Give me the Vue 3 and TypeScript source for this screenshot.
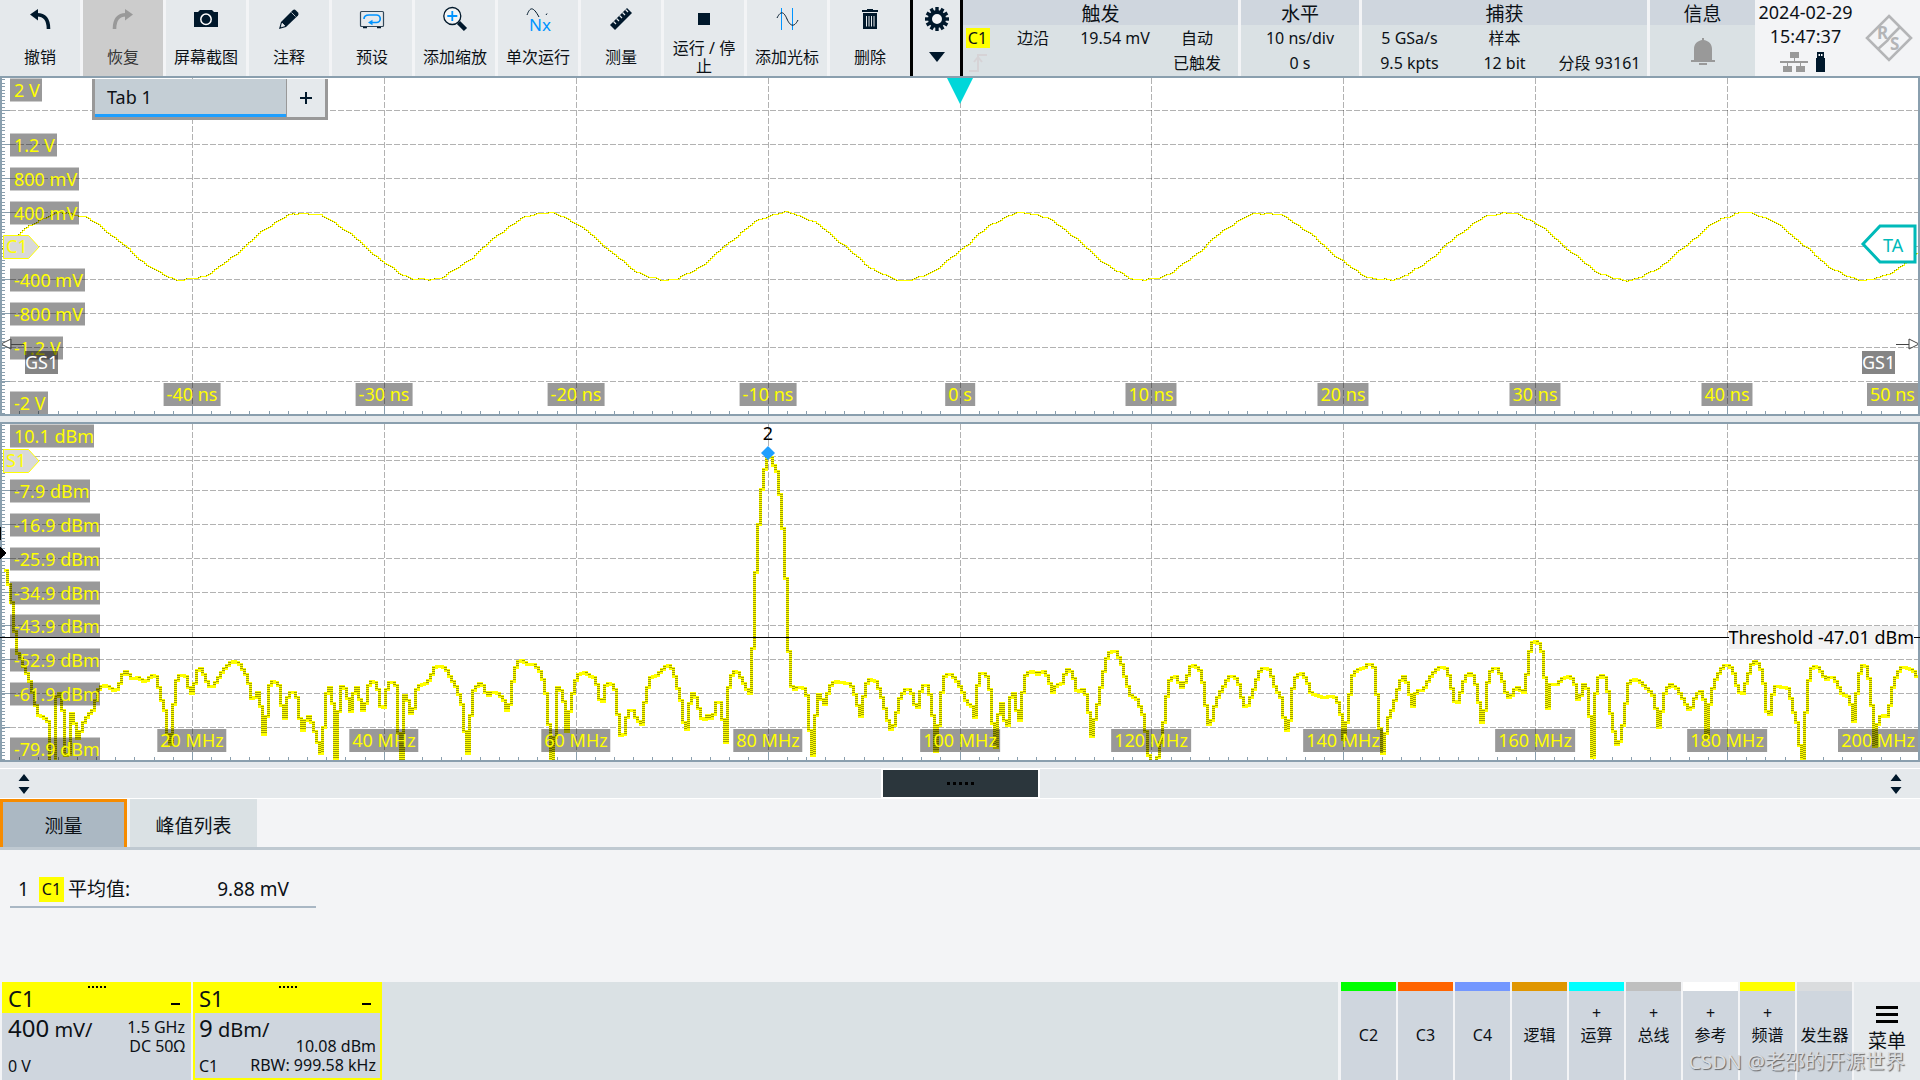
<script setup lang="ts">
interface Tool { id: string; label: string; disabled?: boolean }
interface Label { text: string; pos: number }
interface Source { name: string; color: string; add?: boolean }

const tools: Tool[] = [
  { id: 'undo', label: '撤销' },
  { id: 'redo', label: '恢复', disabled: true },
  { id: 'camera', label: '屏幕截图' },
  { id: 'pencil', label: '注释' },
  { id: 'preset', label: '预设' },
  { id: 'zoom', label: '添加缩放' },
  { id: 'single', label: '单次运行' },
  { id: 'ruler', label: '测量' },
  { id: 'stop', label: '运行 / 停止' },
  { id: 'cursor', label: '添加光标' },
  { id: 'trash', label: '删除' },
]

const sources: Source[] = [
  { name: 'C2', color: '#00ff00' },
  { name: 'C3', color: '#ff6400' },
  { name: 'C4', color: '#7397ff' },
  { name: '逻辑', color: '#e09600' },
  { name: '运算', color: '#00ffff', add: true },
  { name: '总线', color: '#bfbfbf', add: true },
  { name: '参考', color: '#ffffff', add: true },
  { name: '频谱', color: '#ffff00', add: true },
  { name: '发生器', color: '#dadcde' },
]

// Both diagrams share one drawing space.
const W = 1920
const H = 340
const DIVISION = 191.9
const rows = [34.5, 68.5, 102.5, 136.5, 170.5, 203.5, 237.5, 271.5, 305.5]
const columns = Array.from({ length: 9 }, (_, i) => Math.round(DIVISION * (i + 1)) + 0.5)

const voltLabels: Label[] = [
  { text: '2 V', pos: 14 },
  { text: '1.2 V', pos: 69 },
  { text: '800 mV', pos: 103 },
  { text: '400 mV', pos: 137 },
  { text: '-400 mV', pos: 204 },
  { text: '-800 mV', pos: 238 },
  { text: '-1.2 V', pos: 272 },
  { text: '-2 V', pos: 327 },
]
const powerLabels: Label[] = [
  { text: '10.1 dBm', pos: 14 },
  { text: '-7.9 dBm', pos: 69 },
  { text: '-16.9 dBm', pos: 103 },
  { text: '-25.9 dBm', pos: 137 },
  { text: '-34.9 dBm', pos: 171 },
  { text: '-43.9 dBm', pos: 204 },
  { text: '-52.9 dBm', pos: 238 },
  { text: '-61.9 dBm', pos: 272 },
  { text: '-79.9 dBm', pos: 327 },
]
const timeLabels: Label[] = [-40, -30, -20, -10, 0, 10, 20, 30, 40].map((v, i) => ({
  text: v === 0 ? '0 s' : `${v} ns`,
  pos: Math.round(DIVISION * (i + 1)),
}))
const freqLabels: Label[] = [20, 40, 60, 80, 100, 120, 140, 160, 180].map((v, i) => ({
  text: `${v} MHz`,
  pos: Math.round(DIVISION * (i + 1)),
}))

const left = (x: number) => ({ left: `${(x / W) * 100}%` })
const top = (y: number) => ({ top: `${(y / H) * 100}%` })

// Ruler ticks along the left and the bottom edge.
let ticks = ''
for (let i = 1; i < 100; i++) {
  const y = Math.round(i * 3.4) + 0.5
  ticks += `M2 ${y}H5`
}
for (const y of rows) ticks += `M2 ${y}H10`
for (let i = 1; i < 100; i++) {
  const x = Math.round((i * DIVISION) / 10) + 0.5
  ticks += `M${x} 338V${i % 10 === 0 ? 330 : 335}`
}

// Channel 1: an 80 MHz sine with a little quantisation noise.
let sine = ''
let sineDots = ''
let last = NaN
for (let x = 2; x < 1918; x += 2) {
  const ideal = 170 - 33.5 * Math.cos((2 * Math.PI * (x - 304)) / 240)
  const noise = Math.sin(x * 0.19) * 0.7 + Math.sin(x * 0.43) * 0.5
  const y = Math.round(ideal + noise) + 0.5
  if (sine === '') sine = `M${x} ${y}`
  else sine += `V${y}`
  sine += `h2`
  if (y !== last) sineDots += `M${x} ${y}h1`
  last = y
}

// Spectrum sweep: x, y pairs in display units, one list per third of the span.
const sweep: number[][] = [
  [8,420,13,455,18,465,22,530,27,545,30,620,34,625,36,685,42,700,50,715,58,745,68,770,75,800,85,850,92,885,105,890,118,905,120,1022,130,1022,133,910,136,830,143,812,150,840,156,930,160,1022,166,1022,170,880,178,880,184,930,190,960,197,930,205,900,215,885,228,865,235,830,242,800,258,795,280,812,290,800,295,765,308,752,322,775,335,772,348,782,358,780,370,765,382,770,392,830,402,870,408,930,414,1000,420,930,425,830,432,775,442,762,455,770,460,800,467,822,475,790,482,750,492,743,503,780,515,803,528,785,545,750,560,728,572,724,585,730,600,760,610,800,617,850,628,810,634,830,640,885,645,950,652,885,656,800,668,782,682,795,690,870,697,900,703,830,715,810,725,830,732,890,740,930,750,890,757,885,765,920,775,950,780,1000,788,1000,793,880,798,820,806,802,813,830,817,1018,826,1018,829,810,838,792,848,820,857,878,864,820,872,800,880,840,890,882,897,830,903,785,912,780,922,795,932,865,940,860,947,795,957,782,968,795,973,850,977,1022,984,1022,987,830,993,822,1000,850,1007,895,1014,850,1020,800,1030,792,1045,788,1055,765,1063,742,1077,737,1090,742,1103,775,1115,800,1128,840,1135,895,1140,1000,1148,1000,1152,870,1158,810,1172,788,1185,800,1192,832,1205,812,1220,820,1232,840,1244,887,1250,820,1256,770,1265,725,1275,720,1290,732,1305,732,1320,750,1332,790,1340,860,1348,1022,1356,1022,1360,802,1368,798,1378,825,1388,950,1396,850,1405,800,1412,765,1428,755,1440,765,1458,775,1465,830,1474,850,1482,795,1493,788,1503,795,1510,860,1516,935,1524,960,1532,900,1538,868,1550,870,1555,890,1568,912],
  [3,912,8,860,15,810,25,770,40,765,55,745,65,732,78,745,88,790,98,840,104,900,112,935,118,860,126,818,137,835,145,880,153,905,165,883,176,900,184,850,192,840,200,870,205,1022,212,900,216,790,225,757,235,752,248,775,258,805,267,820,271,690,276,680,278,465,282,455,285,318,290,310,293,215,298,205,300,150,305,145,308,112,315,108,322,112,328,150,334,155,336,215,342,225,344,318,349,325,351,470,356,475,357,665,362,670,365,790,378,808,388,797,400,805,408,830,414,930,420,1022,427,930,431,830,438,820,450,855,458,820,468,788,480,783,500,787,515,792,525,825,533,860,538,895,544,850,550,795,560,777,575,780,585,810,595,850,605,900,615,937,625,890,635,830,650,807,660,808,668,830,676,882,684,820,692,793,705,798,712,850,720,930,724,1022,732,880,738,810,745,768,757,760,770,775,785,805,800,850,812,860,818,895,825,800,831,760,845,757,853,790,860,850,867,1022,875,900,882,840,890,870,896,968,903,850,910,810,918,830,926,930,933,850,940,770,955,750,972,762,988,753,998,770,1008,818,1018,795,1032,790,1040,757,1050,743,1060,770,1070,820,1082,805,1092,825,1098,880,1104,953,1112,900,1120,850,1130,780,1140,720,1150,692,1165,693,1178,730,1188,780,1200,825,1215,838,1228,870,1236,920,1245,1010,1252,1022,1265,1022,1272,980,1280,920,1287,840,1297,775,1310,765,1325,803,1338,775,1345,740,1358,735,1370,750,1380,800,1387,890,1395,930,1403,870,1415,825,1430,795,1440,768,1455,768,1465,790,1475,845,1483,868,1492,840,1505,795,1515,755,1527,740,1542,750,1555,805,1568,832],
  [5,880,15,930,22,900,28,810,38,765,50,757,62,775,75,822,90,825,110,832,130,825,142,850,150,900,156,980,163,890,170,810,178,755,195,745,208,740,216,726,228,740,236,830,243,930,248,1015,256,950,262,900,275,860,285,815,295,775,303,768,313,800,322,865,332,812,350,808,362,780,375,755,390,740,408,745,418,800,430,863,440,820,450,775,460,757,475,770,483,830,494,918,502,850,508,775,518,743,532,745,543,780,552,820,562,838,570,810,580,800,595,820,603,760,608,700,617,665,630,662,642,700,648,790,653,885,658,790,675,793,690,775,705,767,718,780,725,820,731,858,738,800,747,782,755,850,760,940,765,1022,770,850,774,780,783,763,797,775,805,850,815,930,826,985,835,940,845,850,852,790,865,775,880,785,895,800,912,825,920,870,927,930,935,860,943,805,955,793,968,800,985,835,1003,875,1015,830,1027,810,1036,830,1043,960,1050,860,1060,795,1072,760,1085,735,1100,733,1110,760,1120,810,1130,825,1142,780,1152,735,1163,720,1175,740,1185,800,1190,870,1196,903,1203,830,1213,797,1230,800,1245,805,1255,870,1265,910,1274,1000,1280,1022,1286,880,1290,800,1300,745,1312,735,1325,755,1335,780,1350,768,1362,785,1375,822,1392,830,1398,860,1402,922,1408,860,1415,770,1425,735,1435,738,1443,790,1450,880,1457,1010,1464,890,1475,885,1488,890,1495,830,1503,780,1512,755,1523,740,1538,745,1555,755,1563,790],
]

const points: { x: number; y: number }[] = []
sweep.forEach((list, part) => {
  for (let i = 0; i < list.length; i += 2) {
    points.push({ x: (list[i] + part * 1568) / 2.45, y: list[i + 1] / 3 - 2 })
  }
})

function levelAt(x: number): number {
  const i = points.findIndex((p) => p.x >= x)
  if (i < 0) return points[points.length - 1].y
  if (i === 0) return points[0].y
  const a = points[i - 1]
  const b = points[i]
  return a.y + ((b.y - a.y) * (x - a.x)) / (b.x - a.x)
}

// The analyser draws a staircase, one bin every three units.
let spectrum = ''
let risers = ''
let previous = NaN
for (let x = 4; x < 1918; x += 3) {
  const y = Math.round(levelAt(x + 1))
  if (spectrum === '') {
    spectrum = `M${x} ${y}`
  } else {
    spectrum += `V${y}`
    const lo = Math.min(previous, y)
    const hi = Math.max(previous, y)
    if (hi - lo > 1) risers += `M${x} ${lo}V${hi}`
  }
  spectrum += 'h3'
  previous = y
}

// Gear outline with twelve teeth.
const teeth = Array.from({ length: 12 }, (_, i) => i * 30)
</script>

<template>
  <div class="scope">
    <header class="top">
      <nav class="tools">
        <button v-for="t in tools" :key="t.id" type="button" class="tool" :disabled="t.disabled">
          <svg class="icon" viewBox="0 0 28 28" aria-hidden="true">
            <g v-if="t.id === 'undo'" fill="#00182b">
              <path d="M4 9.500L12 4v11.500z" />
              <path d="M11 9.800c8 0 11.500 5 11.500 14.200" fill="none" stroke="#00182b" stroke-width="3.600" />
            </g>
            <g v-else-if="t.id === 'redo'" fill="#999">
              <path d="M24 9.500L16 4v11.500z" />
              <path d="M17 9.800c-8 0-11.500 5-11.500 14.200" fill="none" stroke="#999" stroke-width="3.600" />
            </g>
            <g v-else-if="t.id === 'camera'">
              <path d="M2 7h4l2-2h12l2 2h4v15H2z" fill="#00182b" />
              <circle cx="14" cy="14.300" r="5.200" fill="#00182b" stroke="#fff" stroke-width="1.500" />
            </g>
            <g v-else-if="t.id === 'pencil'">
              <path d="M4 24l2-7L18 5q1.500-1 3 .5l2 2q1.200 1.500 0 3L11 22z" fill="#00182b" />
              <path d="M6.200 21.800l1-3.600 2.600 2.600zM16.500 7.500l4 4" fill="#e5e9ec" stroke="#e5e9ec" stroke-width=".8" />
            </g>
            <g v-else-if="t.id === 'preset'" fill="none">
              <rect x="2.500" y="6.500" width="23" height="15" rx="1" stroke="#34495a" stroke-width="1.200" />
              <path d="M5 22.500h4M19 22.500h4" stroke="#00182b" stroke-width="1.500" />
              <path d="M6 14c0-3 2-4 5-4h7.500a3.700 3.700 0 0 1 0 7.500H13" stroke="#0094ff" stroke-width="1.700" />
              <path d="M10 17.500l4.500-2.700v5.400z" fill="#0094ff" />
            </g>
            <g v-else-if="t.id === 'zoom'" fill="none">
              <path d="M17.500 17.500l7 7" stroke="#00182b" stroke-width="4.500" />
              <circle cx="11.300" cy="11" r="8.500" stroke="#00182b" stroke-width="1.300" fill="#f3f5f6" />
              <path d="M11.300 6v10M6.300 11h10" stroke="#0094ff" stroke-width="1.800" />
            </g>
            <g v-else-if="t.id === 'single'">
              <path d="M3 10c3-8 6-9 12 2M22 10l1-1.500" fill="none" stroke="#00182b" stroke-width="1" />
              <text x="5" y="26" font-size="17" fill="#0094ff">Nx</text>
            </g>
            <g v-else-if="t.id === 'ruler'">
              <path d="M3 20L20 3l5 5L8 25z" fill="#00182b" />
              <path d="M6.500 16.500l2.500 2.500M9.500 13.500l2.500 2.500M12.500 10.500l2.500 2.500M15.500 7.500l2.500 2.500M18.500 4.500l2.500 2.500" stroke="#e5e9ec" stroke-width="1.200" />
            </g>
            <rect v-else-if="t.id === 'stop'" x="8" y="8" width="12" height="12" fill="#00182b" />
            <g v-else-if="t.id === 'cursor'" fill="none">
              <path d="M8.500 3v22M19.500 3v22" stroke="#0094ff" stroke-width="1" />
              <path d="M4 13C8 5 11 7 14 14s7 9 11 1" stroke="#00182b" stroke-width="1" />
            </g>
            <g v-else fill="#00182b">
              <path d="M6 5h5V4h6v1h5v2H6zM7 8h14v16H7z" />
              <path d="M10.500 11v10.500M13 11v10.500M15.500 11v10.500M18 11v10.500" stroke="#e5e9ec" stroke-width="1" />
            </g>
          </svg>
          <span class="tool-label">{{ t.label }}</span>
        </button>
      </nav>

      <button type="button" class="settings" aria-label="设置">
        <svg class="icon" viewBox="0 0 28 28" aria-hidden="true">
          <g fill="#00182b">
            <rect v-for="a in teeth" :key="a" x="12.300" y="2" width="3.400" height="6" :transform="`rotate(${a} 14 14)`" />
            <circle cx="14" cy="14" r="7" fill="#f3f5f6" stroke="#00182b" stroke-width="4" />
          </g>
        </svg>
        <svg class="caret" viewBox="0 0 16 10" aria-hidden="true"><path d="M0 0h16L8 10z" fill="#00182b" /></svg>
      </button>

      <section class="status trigger">
        <h2>触发</h2>
        <div class="status-grid trigger-grid">
          <span class="badge">C1</span><span>边沿</span><span>19.54 mV</span><span>自动</span>
          <svg class="edge" viewBox="0 0 20 20" aria-hidden="true">
            <path d="M1 18h9V2h9M6 9l4-5 4 5" fill="none" stroke="#d6d3d6" stroke-width="2" />
          </svg>
          <span></span><span></span><span>已触发</span>
        </div>
      </section>
      <section class="status horizontal">
        <h2>水平</h2>
        <div class="status-grid">
          <span>10 ns/div</span>
          <span>0 s</span>
        </div>
      </section>
      <section class="status capture">
        <h2>捕获</h2>
        <div class="status-grid capture-grid">
          <span>5 GSa/s</span><span>样本</span><span></span>
          <span>9.5 kpts</span><span>12 bit</span><span>分段 93161</span>
        </div>
      </section>
      <section class="status info">
        <h2>信息</h2>
        <div class="status-grid bell-cell">
          <svg class="bell" viewBox="0 0 24 28" aria-hidden="true">
            <path d="M11 0h2v2c5 1 8 4 8 9v11h3v2H0v-2h3V11c0-5 3-8 8-9zM8 25h8v2H8z" fill="#999" />
          </svg>
        </div>
      </section>
      <div class="clock">
        <div class="clock-text">
          <time>2024-02-29</time>
          <time>15:47:37</time>
          <div class="links">
            <svg class="lan" viewBox="0 0 28 20" aria-hidden="true">
              <path d="M10 0h9v6h-9zM14 6h1v3h13v2H0V9h14zM7 11h1v3h4v6H3v-6h4zM20 11h1v3h4v6h-9v-6h4z" fill="#999" />
            </svg>
            <svg class="usb" viewBox="0 0 9 20" aria-hidden="true">
              <path d="M1 0h7v6h1v14H0V6h1z" fill="#00182b" />
              <path d="M2.500 2h1.500v2H2.500zM5 2h1.500v2H5z" fill="#fff" />
            </svg>
          </div>
        </div>
        <svg class="logo" viewBox="0 0 48 48" role="img" aria-label="R&amp;S">
          <g fill="none" stroke="#b4b5b7" stroke-width="2.600">
            <path d="M24 2l22 22-22 22L2 24z" />
            <path d="M35 13L26 22Q24 24 22 27L13 35" />
          </g>
          <text x="12" y="25" font-size="17" font-weight="700" fill="#b4b5b7">R</text>
          <text x="25" y="36" font-size="17" font-weight="700" fill="#b4b5b7">S</text>
        </svg>
      </div>
    </header>

    <main class="diagrams">
      <section class="plot">
        <svg class="canvas" :viewBox="`0 0 ${W} ${H}`" preserveAspectRatio="none" aria-hidden="true">
          <g class="grid">
            <path v-for="y in rows" :key="y" :d="`M2 ${y}H1918`" />
            <path v-for="x in columns" :key="x" :d="`M${x} 2V338`" />
          </g>
          <path class="ticks" :d="ticks" />
          <path class="sine" :d="sine" />
          <path class="dots" :d="sineDots" />
        </svg>
        <span v-for="l in voltLabels" :key="l.text" class="tag y-tag" :style="top(l.pos)">{{ l.text }}</span>
        <span v-for="l in timeLabels" :key="l.text" class="tag x-tag" :style="left(l.pos)">{{ l.text }}</span>
        <span class="tag x-tag end">50 ns</span>
        <span class="gate gate-left">GS1</span>
        <span class="gate gate-right">GS1</span>
        <svg class="gate-arrow arrow-left" viewBox="0 0 24 12" aria-hidden="true">
          <path d="M24 6.500H11M11 1v10L1 6z" fill="none" stroke="#444" />
        </svg>
        <svg class="gate-arrow arrow-right" viewBox="0 0 24 12" aria-hidden="true">
          <path d="M0 6.500H13M13 1v10l10-5z" fill="none" stroke="#444" />
        </svg>
        <div class="flag" :style="top(171)">
          <svg viewBox="0 0 37 24" aria-hidden="true"><path d="M.5.500h25L36 12 25.500 23.500H.5z" fill="#d9d9d9" stroke="#ff0" /></svg>
          <span>C1</span>
        </div>
        <div class="level">
          <svg viewBox="0 0 57 40" aria-hidden="true"><path d="M20 2h35v36H20L3 20z" fill="#fff" stroke="#00bab9" stroke-width="3" /></svg>
          <span>TA</span>
        </div>
        <svg class="trigger-mark" viewBox="0 0 26 26" aria-hidden="true"><path d="M0 0h26L13 26z" fill="#00d7d9" /></svg>

        <div class="tabs">
          <button type="button" class="tab-one">Tab 1</button>
          <button type="button" class="tab-add" aria-label="添加">
            <svg viewBox="0 0 14 14" aria-hidden="true"><path d="M7 1v12M1 7h12" stroke="#00182b" stroke-width="2" /></svg>
          </button>
        </div>
      </section>

      <section class="plot power">
        <svg class="canvas" :viewBox="`0 0 ${W} ${H}`" preserveAspectRatio="none" aria-hidden="true">
          <g class="grid">
            <path v-for="y in rows" :key="y" :d="`M2 ${y}H1918`" />
            <path d="M2 38.500H1918" />
            <path v-for="x in columns" :key="x" :d="`M${x} 2V338`" />
          </g>
          <path class="ticks" :d="ticks" />
          <path class="spectrum" :d="spectrum" />
          <path class="risers" :d="risers" />
        </svg>
        <span v-for="l in powerLabels" :key="l.text" class="tag y-tag" :style="top(l.pos)">{{ l.text }}</span>
        <span v-for="l in freqLabels" :key="l.text" class="tag x-tag" :style="left(l.pos)">{{ l.text }}</span>
        <span class="tag x-tag end">200 MHz</span>
        <svg class="canvas over" :viewBox="`0 0 ${W} ${H}`" preserveAspectRatio="none" aria-hidden="true">
          <path d="M0 215.500H1920M.5 105v13" stroke="#000" />
          <path d="M0 125l6 6-6 6z" />
        </svg>
        <span class="threshold">Threshold -47.01 dBm</span>
        <div class="flag" :style="top(39)">
          <svg viewBox="0 0 37 24" aria-hidden="true"><path d="M.5.500h25L36 12 25.500 23.500H.5z" fill="#d9d9d9" stroke="#ff0" /></svg>
          <span>S1</span>
        </div>
        <div class="peak">
          <span>2</span>
          <svg viewBox="0 0 14 14" aria-hidden="true"><path d="M7 0l7 7-7 7-7-7z" fill="#1e9fff" /></svg>
        </div>
      </section>
    </main>

    <div class="splitter">
      <button type="button" class="updown" aria-label="调整">
        <svg viewBox="0 0 12 20" aria-hidden="true"><path d="M6 0l5.500 7H.5zM6 20l5.500-7H.5z" fill="#00182b" /></svg>
      </button>
      <button type="button" class="handle" aria-label="拖动"><i v-for="n in 5" :key="n"></i></button>
      <button type="button" class="updown" aria-label="调整">
        <svg viewBox="0 0 12 20" aria-hidden="true"><path d="M6 0l5.500 7H.5zM6 20l5.500-7H.5z" fill="#00182b" /></svg>
      </button>
    </div>

    <section class="results">
      <div class="result-tabs">
        <button type="button" class="result-tab active">测量</button>
        <button type="button" class="result-tab">峰值列表</button>
      </div>
      <table class="measure">
        <tbody>
          <tr>
            <td class="index">1</td>
            <td class="source"><span class="chip">C1</span></td>
            <th scope="row">平均值:</th>
            <td class="value">9.88 mV</td>
          </tr>
        </tbody>
      </table>
    </section>

    <footer class="bottom">
      <article class="card">
        <header class="card-head"><b>C1</b><span class="grip"><i v-for="n in 5" :key="n"></i></span><button type="button" aria-label="最小化"></button></header>
        <div class="card-body">
          <div class="scale"><p><big>400</big> mV/</p><small>0 V</small></div>
          <div class="details"><span>1.5 GHz</span><span>DC 50Ω</span><span></span></div>
        </div>
      </article>
      <article class="card selected">
        <header class="card-head"><b>S1</b><span class="grip"><i v-for="n in 5" :key="n"></i></span><button type="button" aria-label="最小化"></button></header>
        <div class="card-body">
          <div class="scale"><p><big>9</big> dBm/</p><small>C1</small></div>
          <div class="details"><span></span><span>10.08 dBm</span><span>RBW: 999.58 kHz</span></div>
        </div>
      </article>
      <div class="spacer"></div>
      <button v-for="s in sources" :key="s.name" type="button" class="source-button" :style="{ borderTopColor: s.color }">
        <span class="plus">{{ s.add ? '+' : '' }}</span>
        <span>{{ s.name }}</span>
      </button>
      <button type="button" class="menu">
        <svg viewBox="0 0 22 18" aria-hidden="true"><path d="M0 1.500h22M0 8.500h22M0 15.500h22" stroke="#000" stroke-width="3" /></svg>
        <span>菜单</span>
      </button>
      <span class="watermark">CSDN @老邵的开源世界</span>
    </footer>
  </div>
</template>

<style>
body {
  margin: 0;
  background: #f3f4f6;
}
</style>

<style scoped>
.scope {
  display: flex;
  flex-direction: column;
  min-height: 100vh;
  font-family: "Noto Sans", "Noto Sans CJK SC", sans-serif;
  font-size: 16px;
  line-height: 18px;
  color: #0c1116;
  background: #f3f4f6;
}
button {
  font: inherit;
  color: inherit;
  border: 0;
  padding: 0;
  border-radius: 0;
}
h2, p {
  margin: 0;
  font-weight: 400;
}
svg {
  display: block;
}

.top {
  display: flex;
  height: 76px;
  background: #f3f4f6;
}
.tools {
  display: flex;
  gap: 3px;
}
.tool {
  display: flex;
  flex-direction: column;
  align-items: center;
  width: 80px;
  padding-top: 5px;
  background: #e5e9ec;
}
.tool:disabled {
  background: #ccc;
  color: #333;
}
.icon {
  width: 28px;
  height: 28px;
  overflow: visible;
}
.tool-label {
  display: flex;
  align-items: center;
  height: 36px;
  margin-top: 6px;
  padding: 0 4px;
  text-align: center;
}
.settings {
  display: flex;
  flex-direction: column;
  align-items: center;
  gap: 19px;
  width: 53px;
  padding-top: 5px;
  background: #e5e9ec;
  border-left: 3px solid #000;
  border-right: 3px solid #000;
}
.caret {
  width: 16px;
  height: 10px;
}
.status {
  display: flex;
  flex-direction: column;
  margin-right: 3px;
  background: #dae1e4;
}
.status h2 {
  height: 25px;
  font-size: 19px;
  line-height: 29px;
  text-align: center;
  background: #cfd6de;
}
.status-grid {
  display: grid;
  grid-auto-rows: 25px;
  align-items: center;
  justify-items: center;
  white-space: nowrap;
}
.trigger { flex: 275; }
.horizontal { flex: 118; }
.capture { flex: 285; }
.info { flex: 105; margin-right: 0; }
.trigger-grid { grid-template-columns: 29px 1fr 1fr 1fr; }
.capture-grid { grid-template-columns: 1fr 1fr 1fr; }
.badge {
  width: 24px;
  line-height: 20px;
  text-align: center;
  background: #ff0;
}
.edge {
  width: 20px;
  height: 20px;
}
.bell-cell { padding-top: 14px; }
.bell {
  width: 24px;
  height: 28px;
}
.clock {
  display: flex;
  flex: none;
  align-items: flex-start;
  width: 165px;
}
.clock-text {
  display: flex;
  flex-direction: column;
  align-items: center;
  width: 101px;
  font-size: 18px;
  line-height: 24px;
}
.links {
  display: flex;
  gap: 8px;
  margin: 4px 6px 0 0;
}
.lan { width: 28px; height: 20px; }
.usb { width: 9px; height: 20px; }
.logo {
  width: 48px;
  height: 48px;
  margin: 14px 0 0 9px;
}

.diagrams {
  display: flex;
  flex: 1;
  flex-direction: column;
  gap: 6px;
  padding-bottom: 6px;
  background: #e5e9ec;
}
.plot {
  position: relative;
  flex: 1;
  min-height: 300px;
  font-size: 18px;
  line-height: 23px;
  background: #fff;
}
.plot::after {
  content: "";
  position: absolute;
  inset: 0;
  border: 2px solid #8a9fae;
  pointer-events: none;
}
.canvas {
  position: absolute;
  width: 100%;
  height: 100%;
  shape-rendering: crispEdges;
}
.over {
  z-index: 1;
  pointer-events: none;
}
.grid path {
  stroke: rgba(0, 0, 0, 0.3);
  stroke-dasharray: 6 2;
}
.ticks {
  stroke: #8a9fae;
}
.sine {
  fill: none;
  stroke: #ff0;
  stroke-width: 1;
}
.dots {
  stroke: #8a8a00;
}
.spectrum {
  fill: none;
  stroke: #ff0;
  stroke-width: 3;
}
.risers {
  fill: none;
  stroke: #a0a000;
  stroke-width: 3;
  stroke-dasharray: 1 1;
}
.tag {
  position: absolute;
  color: #ff0;
  white-space: nowrap;
  background: rgba(0, 0, 0, 0.4);
}
.y-tag {
  left: 10px;
  padding: 0 2px 0 4px;
  transform: translateY(-50%);
}
.power .y-tag {
  padding-right: 0;
}
.x-tag {
  bottom: 10px;
  padding: 0 3px;
  transform: translateX(-50%);
}
.x-tag.end {
  right: 2px;
  transform: none;
}
.gate {
  position: absolute;
  bottom: 42px;
  width: 33px;
  color: #fff;
  text-align: center;
  background: rgba(0, 0, 0, 0.48);
}
.gate-left { left: 25px; }
.gate-right { right: 25px; }
.gate-arrow {
  position: absolute;
  bottom: 66px;
  width: 24px;
  height: 12px;
}
.arrow-left { left: 0; }
.arrow-right { right: 0; }
.flag {
  position: absolute;
  left: 3px;
  width: 37px;
  height: 24px;
  color: #ff0;
  transform: translateY(-50%);
}
.flag svg,
.level svg {
  position: absolute;
  width: 100%;
  height: 100%;
}
.flag span {
  position: relative;
  padding-left: 3px;
}
.level {
  position: absolute;
  top: 50%;
  right: 3px;
  width: 57px;
  height: 40px;
  margin-top: -22px;
  line-height: 43px;
  color: #00bab9;
}
.level span {
  position: relative;
  padding-left: 23px;
}
.trigger-mark {
  position: absolute;
  top: 2px;
  left: 50%;
  width: 26px;
  height: 26px;
  transform: translateX(-50%);
}
.tabs {
  position: absolute;
  top: 3px;
  left: 92px;
  display: flex;
  gap: 1px;
  height: 38px;
  border: 3px solid #999;
  border-top: 0;
  background: #999;
}
.tab-one {
  width: 191px;
  padding: 2px 0 0 12px;
  text-align: left;
  background: #c4ced5;
  border-bottom: 3px solid #1e9fff;
}
.tab-add {
  display: flex;
  align-items: center;
  justify-content: center;
  width: 38px;
  padding-right: 1px;
  background: #e5e9ec;
}
.tab-add svg {
  width: 14px;
  height: 14px;
}
.threshold {
  position: absolute;
  z-index: 2;
  top: 60%;
  right: 6px;
  color: #000;
  background: #f2f2f2;
}
.peak {
  position: absolute;
  top: 0;
  left: 40%;
  display: flex;
  flex-direction: column;
  align-items: center;
  gap: 1px;
  color: #000;
  transform: translateX(-50%);
}
.peak svg {
  width: 14px;
  height: 14px;
}

.splitter {
  display: flex;
  align-items: center;
  justify-content: space-between;
  height: 29px;
  padding: 0 18px;
  background: #e5e9ec;
  border-top: 1px solid #fff;
  border-bottom: 1px solid #fff;
}
.updown {
  width: 12px;
  height: 20px;
  background: none;
}
.updown svg {
  width: 12px;
  height: 20px;
}
.handle {
  display: flex;
  align-items: center;
  justify-content: center;
  gap: 3px;
  width: 159px;
  height: 29px;
  background: #2b363c;
  border: solid #fff;
  border-width: 1px 2px;
}
.handle i {
  width: 3px;
  height: 3px;
  background: #000;
}

.results {
  height: 183px;
  flex: none;
}
.result-tabs {
  display: flex;
  gap: 3px;
  border-bottom: 3px solid #bfc9d1;
}
.result-tab {
  width: 127px;
  height: 48px;
  padding-top: 5px;
  font-size: 19px;
  background: #dae1e4;
}
.result-tab.active {
  padding-top: 2px;
  background: #abb8c3;
  border: 3px solid #f68b00;
  border-bottom: 0;
}
.measure {
  width: 306px;
  margin: 23px 0 0 10px;
  border-collapse: collapse;
  font-size: 19px;
  line-height: 25px;
  border-bottom: 2px solid #a9b7c4;
}
.measure td,
.measure th {
  height: 33px;
  padding: 0;
  font-weight: 400;
  text-align: left;
}
.measure .index { width: 29px; padding-left: 8px; box-sizing: border-box; }
.measure .source { width: 29px; }
.chip {
  display: block;
  width: 25px;
  font-size: 16px;
  text-align: center;
  background: #ff0;
}
.measure .value {
  padding-right: 27px;
  text-align: right;
}

.bottom {
  position: relative;
  display: flex;
  gap: 2px;
  height: 98px;
  padding-left: 2px;
}
.card {
  display: flex;
  flex: none;
  flex-direction: column;
  width: 189px;
  white-space: nowrap;
  background: #cfd6de;
}
.card-head {
  position: relative;
  display: flex;
  flex: none;
  justify-content: space-between;
  height: 31px;
  padding: 0 11px 0 6px;
  background: #ff0;
}
.card-head b {
  font-size: 22px;
  font-weight: 400;
  line-height: 32px;
}
.card-head button {
  align-self: flex-end;
  width: 9px;
  height: 2px;
  margin-bottom: 8px;
  background: #000;
}
.grip {
  position: absolute;
  top: 4px;
  left: 50%;
  display: flex;
  gap: 2px;
  transform: translateX(-50%);
}
.grip i {
  width: 2px;
  height: 2px;
  background: #000;
}
.card-body {
  display: flex;
  flex: 1;
  justify-content: space-between;
  padding: 1px 6px 2px;
}
.selected .card-body {
  padding: 1px 4px 0;
  border: 2px solid #ff0;
  border-top: 0;
}
.scale {
  display: flex;
  flex-direction: column;
  justify-content: space-between;
  padding-bottom: 3px;
}
.scale p {
  width: 0;
  font-size: 20px;
  line-height: 27px;
}
.scale big { font-size: 24px; }
.scale small { font-size: 16px; }
.details {
  display: grid;
  grid-template-rows: 19px 19px 19px;
  padding-top: 4px;
  text-align: right;
}
.spacer {
  flex: 1;
  margin: 0 1px 0 -2px;
  background: #dae1e4;
}
.source-button {
  display: flex;
  flex-direction: column;
  align-items: center;
  gap: 4px;
  width: 55px;
  padding-top: 13px;
  white-space: nowrap;
  background: #cfd6de;
  border-top: 9px solid;
}
.plus {
  height: 18px;
}
.menu {
  display: flex;
  flex-direction: column;
  align-items: center;
  gap: 8px;
  width: 66px;
  padding-top: 24px;
  font-size: 19px;
  background: #e5e9ec;
}
.menu svg {
  width: 22px;
  height: 18px;
}
.watermark {
  position: absolute;
  right: 15px;
  bottom: 6px;
  font-size: 20px;
  line-height: 24px;
  color: #d9dce0;
  text-shadow: 1px 1px 1px #666;
}
</style>
